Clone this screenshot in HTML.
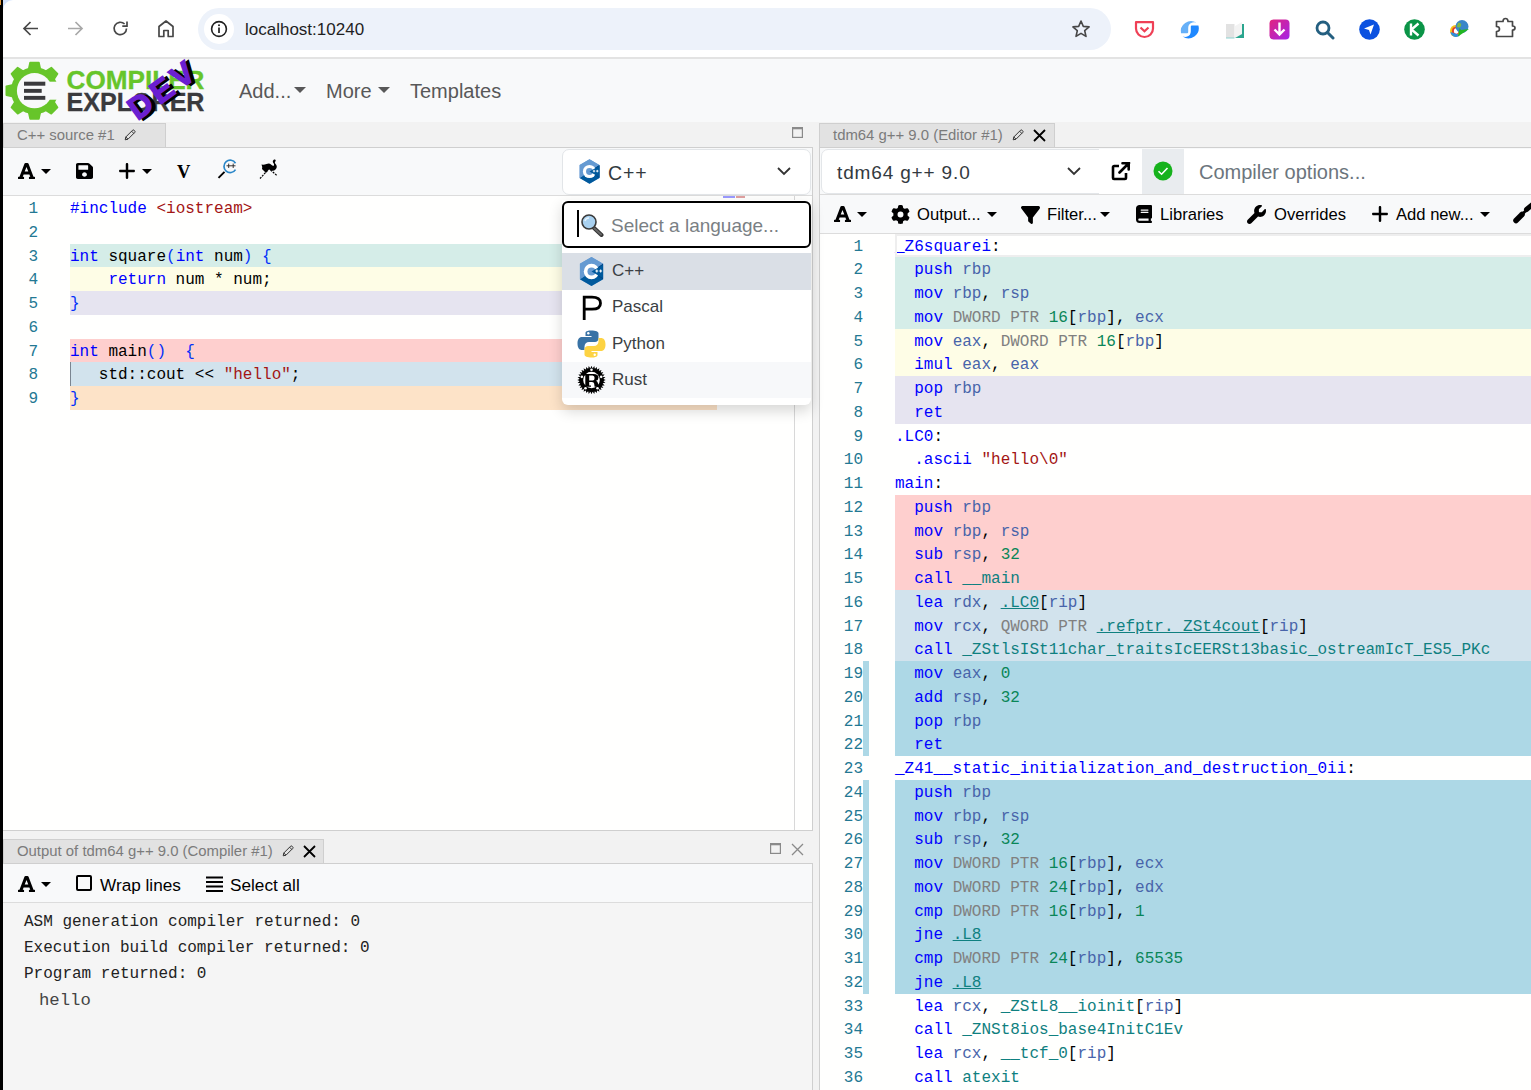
<!DOCTYPE html>
<html><head><meta charset="utf-8">
<style>
*{box-sizing:border-box;margin:0;padding:0}
html,body{width:1531px;height:1090px;overflow:hidden;background:#fff;font-family:"Liberation Sans",sans-serif;position:relative}
.a{position:absolute}
.t{position:absolute;white-space:pre;line-height:1}
.mono{font-family:"Liberation Mono",monospace}
</style></head><body>
<!-- black strip -->
<div class="a" style="left:0;top:0;width:3px;height:1090px;background:#000"></div>
<!-- browser chrome -->
<div class="a" style="left:3px;top:0;width:1528px;height:57px;background:#fff"></div>
<div class="a" style="left:3px;top:0;width:14px;height:10px;background:#d3e3fd"></div>
<div class="a" style="left:3px;top:0;width:30px;height:30px;background:#fff;border-top-left-radius:10px"></div>
<div class="a" style="left:0;top:0;width:1px;height:5px;background:#e39a3b"></div>
<div class="a" style="left:3px;top:57px;width:1528px;height:2px;background:#e3e3e3"></div>
<div class="a" style="left:198px;top:8px;width:913px;height:42px;border-radius:21px;background:#edf2fa"></div>
<div class="a" style="left:204px;top:14px;width:30px;height:30px;border-radius:15px;background:#fff"></div>
<div class="t" style="left:245px;top:21px;font-size:17px;color:#1f1f1f">localhost:10240</div>


<!-- browser icons -->
<svg class="a" style="left:22px;top:20px" width="17" height="17" viewBox="0 0 17 17"><path d="M16 8.5H2.5M8.5 2L2 8.5L8.5 15" fill="none" stroke="#474747" stroke-width="1.7"/></svg>
<svg class="a" style="left:67px;top:20px" width="17" height="17" viewBox="0 0 17 17"><path d="M1 8.5H14.5M8.5 2L15 8.5L8.5 15" fill="none" stroke="#a8a8a8" stroke-width="1.7"/></svg>
<svg class="a" style="left:111px;top:19px" width="19" height="19" viewBox="0 0 19 19"><path d="M15.5 9.5A6.2 6.2 0 1 1 13.6 5" fill="none" stroke="#474747" stroke-width="1.7"/><path d="M16 2.5V7.2H11.3" fill="none" stroke="#474747" stroke-width="1.7"/></svg>
<svg class="a" style="left:157px;top:19px" width="18" height="19" viewBox="0 0 18 19"><path d="M2 17.5V7.5L9 2L16 7.5V17.5H11.2V11.5H6.8V17.5Z" fill="none" stroke="#474747" stroke-width="1.7" stroke-linejoin="round"/></svg>
<svg class="a" style="left:210px;top:20px" width="18" height="18" viewBox="0 0 18 18"><circle cx="9" cy="9" r="7.4" fill="none" stroke="#1f1f1f" stroke-width="1.6"/><path d="M9 7.6V13" stroke="#1f1f1f" stroke-width="1.7"/><circle cx="9" cy="5.3" r="1" fill="#1f1f1f"/></svg>
<svg class="a" style="left:1071px;top:19px" width="20" height="20" viewBox="0 0 20 20"><path d="M10 2L12.3 7.4L18.1 7.9L13.7 11.7L15 17.4L10 14.4L5 17.4L6.3 11.7L1.9 7.9L7.7 7.4Z" fill="none" stroke="#474747" stroke-width="1.6" stroke-linejoin="round"/></svg>
<svg class="a" style="left:1134px;top:20px" width="21" height="19" viewBox="0 0 21 19"><path d="M2 2.2H19V8.5A8.5 8.5 0 0 1 2 8.5Z" fill="none" stroke="#ef4056" stroke-width="2.2" stroke-linejoin="round"/><path d="M6.5 7.5L10.5 11.3L14.5 7.5" fill="none" stroke="#ef4056" stroke-width="2.2"/></svg>
<svg class="a" style="left:1179px;top:19px" width="21" height="21" viewBox="0 0 21 21"><path d="M2 14.3A10.3 10.3 0 0 1 17.4 3.5Q15 3 13.5 3.5Q9.2 4.5 9.2 9V13.3Q9.2 14.3 8.2 14.3Z" fill="#66b0f8"/><path d="M19.4 6.5A10.3 10.3 0 0 1 3.6 17.6Q6 18.2 7.5 17.8Q11.8 16.8 11.8 12.2V7.5Q11.8 6.5 12.8 6.5Z" fill="#1f88ff"/></svg>
<svg class="a" style="left:1225px;top:21px" width="20" height="18" viewBox="0 0 20 18"><path d="M1 3H9.5V17H1Z" fill="#e2e2e2"/><path d="M10 17L17 13V1L10 5Z" fill="#f3f3f3"/><path d="M10 17H19V3H17V13Z" fill="#2aa58e"/><path d="M1 16.5H9.5V17.5H1Z" fill="#8fd3d0"/></svg>
<svg class="a" style="left:1269px;top:19px" width="21" height="21" viewBox="0 0 21 21"><defs><linearGradient id="pk" x1="0" y1="0" x2="1" y2="1"><stop offset="0" stop-color="#e2247f"/><stop offset="1" stop-color="#a424e8"/></linearGradient></defs><rect x="0.5" y="0.5" width="20" height="20" rx="4" fill="url(#pk)"/><path d="M10.5 3.5V15M5.5 10.5L10.5 15.5L15.5 10.5" fill="none" stroke="#fff" stroke-width="2.4"/></svg>
<svg class="a" style="left:1315px;top:20px" width="20" height="20" viewBox="0 0 20 20"><circle cx="8" cy="8" r="6" fill="none" stroke="#245f80" stroke-width="2.8"/><path d="M12.5 12.5L18 18" stroke="#245f80" stroke-width="3" stroke-linecap="round"/></svg>
<svg class="a" style="left:1359px;top:19px" width="21" height="21" viewBox="0 0 21 21"><circle cx="10.5" cy="10.5" r="10.3" fill="#0b51e0"/><path d="M5 9.5L15 5.5L11.5 15.5L10 11Z" fill="#fff"/></svg>
<svg class="a" style="left:1404px;top:19px" width="21" height="21" viewBox="0 0 21 21"><circle cx="10.5" cy="10.5" r="10.3" fill="#0b9447"/><path d="M7 4.5V16.5M14.5 4.5L7.5 10.5L14.5 16.5" fill="none" stroke="#fff" stroke-width="2.4"/></svg>
<svg class="a" style="left:1449px;top:19px" width="22" height="20" viewBox="0 0 22 20"><ellipse cx="6.5" cy="12" rx="5.5" ry="6" fill="#f4c21a"/><ellipse cx="6.5" cy="12" rx="3.5" ry="4" fill="#e23b2a"/><ellipse cx="7.2" cy="12" rx="2.3" ry="2.8" fill="#fff"/><path d="M1.5 13A5.5 6 0 0 0 11 16Z" fill="#2f8fdc"/><circle cx="13" cy="7.5" r="6.5" fill="#3a86c8"/><path d="M9 4C11 3 13 5 12 7C11 9 8 9 8 7Z" fill="#79b84a"/><path d="M9 17.5L20 10L12 11L10.5 9Z" fill="#22b622"/></svg>
<svg class="a" style="left:1495px;top:17px" width="21" height="22" viewBox="0 0 21 22"><path d="M1.5 4.5H8Q8 1.5 10.5 1.5Q13 1.5 13 4.5H17.5V9Q20 9 20 11Q20 13 17.5 13V19.5H1.5V14.5Q4.5 14.5 4.5 12Q4.5 9.5 1.5 9.5Z" fill="none" stroke="#474747" stroke-width="1.7" stroke-linejoin="round"/></svg>
<!-- navbar -->
<div class="a" style="left:3px;top:59px;width:1528px;height:63px;background:#f8f9fa"></div>
<svg class="a" style="left:0;top:0" width="220" height="124" viewBox="0 0 220 124">
<defs><mask id="gm"><rect x="0" y="0" width="220" height="124" fill="#fff"/><rect x="43" y="81.7" width="30" height="18" fill="#000"/><circle cx="34.5" cy="90.7" r="17.6" fill="#000"/></mask></defs>
<g mask="url(#gm)"><circle cx="34.5" cy="90.7" r="23.6" fill="#67c52a"/><path d="M28.30 70.70L30.10 62.50L38.90 62.50L40.70 70.70Z" fill="#67c52a" stroke="#67c52a" stroke-width="1.6" stroke-linejoin="round"/><path d="M44.26 72.17L51.33 67.65L57.55 73.87L53.03 80.94Z" fill="#67c52a" stroke="#67c52a" stroke-width="1.6" stroke-linejoin="round"/><path d="M53.03 100.46L57.55 107.53L51.33 113.75L44.26 109.23Z" fill="#67c52a" stroke="#67c52a" stroke-width="1.6" stroke-linejoin="round"/><path d="M40.70 110.70L38.90 118.90L30.10 118.90L28.30 110.70Z" fill="#67c52a" stroke="#67c52a" stroke-width="1.6" stroke-linejoin="round"/><path d="M24.74 109.23L17.67 113.75L11.45 107.53L15.97 100.46Z" fill="#67c52a" stroke="#67c52a" stroke-width="1.6" stroke-linejoin="round"/><path d="M14.50 96.90L6.30 95.10L6.30 86.30L14.50 84.50Z" fill="#67c52a" stroke="#67c52a" stroke-width="1.6" stroke-linejoin="round"/><path d="M15.97 80.94L11.45 73.87L17.67 67.65L24.74 72.17Z" fill="#67c52a" stroke="#67c52a" stroke-width="1.6" stroke-linejoin="round"/></g>
<rect x="24" y="81.7" width="21.3" height="4" fill="#3a3a3d"/>
<rect x="24" y="88.9" width="17.7" height="3.9" fill="#3a3a3d"/>
<rect x="24" y="95.9" width="21.3" height="3.9" fill="#3a3a3d"/>
<text x="66.5" y="88.9" font-family="Liberation Sans" font-weight="bold" font-size="26" fill="#67c52a" stroke="#67c52a" stroke-width="0.3" textLength="138" lengthAdjust="spacingAndGlyphs">COMPILER</text>
<text x="66.5" y="111" font-family="Liberation Sans" font-weight="bold" font-size="25.3" fill="#3a3a3d" stroke="#3a3a3d" stroke-width="0.3" textLength="138" lengthAdjust="spacingAndGlyphs">EXPLORER</text>
<g transform="translate(141.5,121.5) rotate(-36)"><text x="0" y="0" font-family="Liberation Sans" font-weight="bold" font-size="31.5" fill="#000" stroke="#000" stroke-width="1.4" textLength="74" lengthAdjust="spacing">DEV</text></g>
<g transform="translate(137.5,121) rotate(-36)"><text x="0" y="0" font-family="Liberation Sans" font-weight="bold" font-size="31.5" fill="#6a1fd1" stroke="#6a1fd1" stroke-width="1.4" textLength="74" lengthAdjust="spacing">DEV</text></g>
</svg>
<div class="t" style="left:239px;top:81px;font-size:20px;color:#585858">Add...</div>
<div class="t" style="left:326px;top:81px;font-size:20px;color:#585858">More</div>
<div class="t" style="left:410px;top:81px;font-size:20px;color:#585858">Templates</div>

<!-- tab header rows -->
<div class="a" style="left:3px;top:122px;width:1528px;height:968px;background:#f2f2f2"></div>
<div class="a" style="left:3px;top:123px;width:163px;height:25px;background:#e2e2e2;border:1px solid #cfcfcf;border-bottom:none"></div>
<div class="t" style="left:17px;top:128px;font-size:14.9px;color:#7b7b7b">C++ source #1</div>
<div class="a" style="left:819px;top:123px;width:236px;height:25px;background:#e2e2e2;border:1px solid #cfcfcf;border-bottom:none"></div>
<div class="t" style="left:833px;top:128px;font-size:14.9px;color:#7b7b7b">tdm64 g++ 9.0 (Editor #1)</div>

<!-- left panel -->
<div class="a" style="left:3px;top:147px;width:810px;height:684px;border:1px solid #cfcfcf;border-left:none;background:#fffffe"></div>
<div class="a" style="left:3px;top:148px;width:809px;height:48px;background:#f8f9fa;border-bottom:1px solid #dcdcdc"></div>

<!-- right panel -->
<div class="a" style="left:819px;top:147px;width:712px;height:950px;border:1px solid #cfcfcf;border-right:none;background:#fffffe"></div>
<div class="a" style="left:820px;top:148px;width:711px;height:47px;background:#f8f9fa"></div>
<div class="a" style="left:820px;top:194px;width:711px;height:40px;background:#f8f9fa;border-top:1px solid #dcdcdc;border-bottom:1px solid #dcdcdc"></div>

<!-- output panel -->
<div class="a" style="left:3px;top:838px;width:809px;height:26px;background:#f2f2f2"></div>
<div class="a" style="left:3px;top:839px;width:321px;height:25px;background:#e2e2e2;border:1px solid #cfcfcf;border-bottom:none"></div>
<div class="t" style="left:17px;top:844px;font-size:14.9px;color:#7b7b7b">Output of tdm64 g++ 9.0 (Compiler #1)</div>
<div class="a" style="left:3px;top:863px;width:810px;height:240px;border:1px solid #cfcfcf;border-left:none;background:#f5f5f5"></div>
<div class="a" style="left:3px;top:864px;width:809px;height:39px;background:#f8f9fa;border-bottom:1px solid #dcdcdc"></div>

<!-- left editor content -->
<style>
.ln{position:absolute;left:3px;width:35px;padding-top:2px;text-align:right;color:#237893;font-family:"Liberation Mono",monospace;font-size:16px;line-height:23.75px;height:23.75px}
.cl{position:absolute;white-space:pre;padding-top:2px;font-family:"Liberation Mono",monospace;font-size:16px;line-height:23.75px;height:23.75px;color:#000}
.hl{position:absolute;height:23.75px}
.k{color:#0000ff}.b{color:#0431fa}.s{color:#a31515}.g{color:#808080}.n{color:#098658}.r{color:#4864aa}.f{color:#0f8080}.u{text-decoration:underline}
</style>
<div class="hl" style="left:70px;top:243.5px;width:647px;background:#d5ede8"></div>
<div class="hl" style="left:70px;top:267.25px;width:647px;background:#fefde6"></div>
<div class="hl" style="left:70px;top:291px;width:647px;background:#e6e4f0"></div>
<div class="hl" style="left:70px;top:338.5px;width:647px;background:#fecfce"></div>
<div class="hl" style="left:70px;top:362.25px;width:647px;background:#d2e3ed"></div>
<div class="hl" style="left:70px;top:386px;width:647px;background:#fde3c8"></div>
<div class="ln" style="top:196px">1</div>
<div class="ln" style="top:219.75px">2</div>
<div class="ln" style="top:243.5px">3</div>
<div class="ln" style="top:267.25px">4</div>
<div class="ln" style="top:291px">5</div>
<div class="ln" style="top:314.75px">6</div>
<div class="ln" style="top:338.5px">7</div>
<div class="ln" style="top:362.25px">8</div>
<div class="ln" style="top:386px">9</div>
<div class="cl" style="left:70px;top:196px"><span class="k">#include</span> <span class="s">&lt;iostream&gt;</span></div>
<div class="cl" style="left:70px;top:243.5px"><span class="k">int</span> square<span class="b">(</span><span class="k">int</span> num<span class="b">)</span> <span class="b">{</span></div>
<div class="cl" style="left:70px;top:267.25px">    <span class="k">return</span> num * num;</div>
<div class="cl" style="left:70px;top:291px"><span class="b">}</span></div>
<div class="cl" style="left:70px;top:338.5px"><span class="k">int</span> main<span class="b">()</span>  <span class="b">{</span></div>
<div class="cl" style="left:70px;top:362.25px">   std::cout &lt;&lt; <span class="s">"hello"</span>;</div>
<div class="cl" style="left:70px;top:386px"><span class="b">}</span></div>
<div class="a" style="left:70px;top:362.25px;width:1.3px;height:23.75px;background:#7a8591"></div>
<div class="a" style="left:794px;top:196px;width:1px;height:634px;background:#d8d8d8"></div>

<!-- asm editor -->
<div class="hl" style="left:895px;top:257.25px;width:636px;background:#d5ede8"></div>
<div class="hl" style="left:895px;top:281px;width:636px;background:#d5ede8"></div>
<div class="hl" style="left:895px;top:304.75px;width:636px;background:#d5ede8"></div>
<div class="hl" style="left:895px;top:328.5px;width:636px;background:#fefde6"></div>
<div class="hl" style="left:895px;top:352.25px;width:636px;background:#fefde6"></div>
<div class="hl" style="left:895px;top:376px;width:636px;background:#e6e4f0"></div>
<div class="hl" style="left:895px;top:399.75px;width:636px;background:#e6e4f0"></div>
<div class="hl" style="left:895px;top:494.75px;width:636px;background:#fecfce"></div>
<div class="hl" style="left:895px;top:518.5px;width:636px;background:#fecfce"></div>
<div class="hl" style="left:895px;top:542.25px;width:636px;background:#fecfce"></div>
<div class="hl" style="left:895px;top:566px;width:636px;background:#fecfce"></div>
<div class="hl" style="left:895px;top:589.75px;width:636px;background:#d2e3ed"></div>
<div class="hl" style="left:895px;top:613.5px;width:636px;background:#d2e3ed"></div>
<div class="hl" style="left:895px;top:637.25px;width:636px;background:#d2e3ed"></div>
<div class="hl" style="left:895px;top:661px;width:636px;background:#add8e6"></div>
<div class="hl" style="left:895px;top:684.75px;width:636px;background:#add8e6"></div>
<div class="hl" style="left:895px;top:708.5px;width:636px;background:#add8e6"></div>
<div class="hl" style="left:895px;top:732.25px;width:636px;background:#add8e6"></div>
<div class="hl" style="left:895px;top:779.75px;width:636px;background:#add8e6"></div>
<div class="hl" style="left:895px;top:803.5px;width:636px;background:#add8e6"></div>
<div class="hl" style="left:895px;top:827.25px;width:636px;background:#add8e6"></div>
<div class="hl" style="left:895px;top:851px;width:636px;background:#add8e6"></div>
<div class="hl" style="left:895px;top:874.75px;width:636px;background:#add8e6"></div>
<div class="hl" style="left:895px;top:898.5px;width:636px;background:#add8e6"></div>
<div class="hl" style="left:895px;top:922.25px;width:636px;background:#add8e6"></div>
<div class="hl" style="left:895px;top:946px;width:636px;background:#add8e6"></div>
<div class="hl" style="left:895px;top:969.75px;width:636px;background:#add8e6"></div>
<div class="a" style="left:863px;top:661px;width:6px;height:95px;background:#add8e6"></div>
<div class="a" style="left:863px;top:779.75px;width:6px;height:213.75px;background:#add8e6"></div>
<div class="ln" style="left:820px;width:43px;top:233.5px">1</div>
<div class="cl" style="left:895px;top:233.5px"><span class="k">_Z6squarei</span>:</div>
<div class="ln" style="left:820px;width:43px;top:257.25px">2</div>
<div class="cl" style="left:895px;top:257.25px">  <span class="k">push</span> <span class="r">rbp</span></div>
<div class="ln" style="left:820px;width:43px;top:281px">3</div>
<div class="cl" style="left:895px;top:281px">  <span class="k">mov</span> <span class="r">rbp</span>, <span class="r">rsp</span></div>
<div class="ln" style="left:820px;width:43px;top:304.75px">4</div>
<div class="cl" style="left:895px;top:304.75px">  <span class="k">mov</span> <span class="g">DWORD PTR</span> <span class="n">16</span>[<span class="r">rbp</span>], <span class="r">ecx</span></div>
<div class="ln" style="left:820px;width:43px;top:328.5px">5</div>
<div class="cl" style="left:895px;top:328.5px">  <span class="k">mov</span> <span class="r">eax</span>, <span class="g">DWORD PTR</span> <span class="n">16</span>[<span class="r">rbp</span>]</div>
<div class="ln" style="left:820px;width:43px;top:352.25px">6</div>
<div class="cl" style="left:895px;top:352.25px">  <span class="k">imul</span> <span class="r">eax</span>, <span class="r">eax</span></div>
<div class="ln" style="left:820px;width:43px;top:376px">7</div>
<div class="cl" style="left:895px;top:376px">  <span class="k">pop</span> <span class="r">rbp</span></div>
<div class="ln" style="left:820px;width:43px;top:399.75px">8</div>
<div class="cl" style="left:895px;top:399.75px">  <span class="k">ret</span></div>
<div class="ln" style="left:820px;width:43px;top:423.5px">9</div>
<div class="cl" style="left:895px;top:423.5px"><span class="k">.LC0</span>:</div>
<div class="ln" style="left:820px;width:43px;top:447.25px">10</div>
<div class="cl" style="left:895px;top:447.25px">  <span class="k">.ascii</span> <span class="s">"hello\0"</span></div>
<div class="ln" style="left:820px;width:43px;top:471px">11</div>
<div class="cl" style="left:895px;top:471px"><span class="k">main</span>:</div>
<div class="ln" style="left:820px;width:43px;top:494.75px">12</div>
<div class="cl" style="left:895px;top:494.75px">  <span class="k">push</span> <span class="r">rbp</span></div>
<div class="ln" style="left:820px;width:43px;top:518.5px">13</div>
<div class="cl" style="left:895px;top:518.5px">  <span class="k">mov</span> <span class="r">rbp</span>, <span class="r">rsp</span></div>
<div class="ln" style="left:820px;width:43px;top:542.25px">14</div>
<div class="cl" style="left:895px;top:542.25px">  <span class="k">sub</span> <span class="r">rsp</span>, <span class="n">32</span></div>
<div class="ln" style="left:820px;width:43px;top:566px">15</div>
<div class="cl" style="left:895px;top:566px">  <span class="k">call</span> <span class="f">__main</span></div>
<div class="ln" style="left:820px;width:43px;top:589.75px">16</div>
<div class="cl" style="left:895px;top:589.75px">  <span class="k">lea</span> <span class="r">rdx</span>, <span class="f u">.LC0</span>[<span class="r">rip</span>]</div>
<div class="ln" style="left:820px;width:43px;top:613.5px">17</div>
<div class="cl" style="left:895px;top:613.5px">  <span class="k">mov</span> <span class="r">rcx</span>, <span class="g">QWORD PTR</span> <span class="f u">.refptr._ZSt4cout</span>[<span class="r">rip</span>]</div>
<div class="ln" style="left:820px;width:43px;top:637.25px">18</div>
<div class="cl" style="left:895px;top:637.25px">  <span class="k">call</span> <span class="f">_ZStlsISt11char_traitsIcEERSt13basic_ostreamIcT_ES5_PKc</span></div>
<div class="ln" style="left:820px;width:43px;top:661px">19</div>
<div class="cl" style="left:895px;top:661px">  <span class="k">mov</span> <span class="r">eax</span>, <span class="n">0</span></div>
<div class="ln" style="left:820px;width:43px;top:684.75px">20</div>
<div class="cl" style="left:895px;top:684.75px">  <span class="k">add</span> <span class="r">rsp</span>, <span class="n">32</span></div>
<div class="ln" style="left:820px;width:43px;top:708.5px">21</div>
<div class="cl" style="left:895px;top:708.5px">  <span class="k">pop</span> <span class="r">rbp</span></div>
<div class="ln" style="left:820px;width:43px;top:732.25px">22</div>
<div class="cl" style="left:895px;top:732.25px">  <span class="k">ret</span></div>
<div class="ln" style="left:820px;width:43px;top:756px">23</div>
<div class="cl" style="left:895px;top:756px"><span class="k">_Z41__static_initialization_and_destruction_0ii</span>:</div>
<div class="ln" style="left:820px;width:43px;top:779.75px">24</div>
<div class="cl" style="left:895px;top:779.75px">  <span class="k">push</span> <span class="r">rbp</span></div>
<div class="ln" style="left:820px;width:43px;top:803.5px">25</div>
<div class="cl" style="left:895px;top:803.5px">  <span class="k">mov</span> <span class="r">rbp</span>, <span class="r">rsp</span></div>
<div class="ln" style="left:820px;width:43px;top:827.25px">26</div>
<div class="cl" style="left:895px;top:827.25px">  <span class="k">sub</span> <span class="r">rsp</span>, <span class="n">32</span></div>
<div class="ln" style="left:820px;width:43px;top:851px">27</div>
<div class="cl" style="left:895px;top:851px">  <span class="k">mov</span> <span class="g">DWORD PTR</span> <span class="n">16</span>[<span class="r">rbp</span>], <span class="r">ecx</span></div>
<div class="ln" style="left:820px;width:43px;top:874.75px">28</div>
<div class="cl" style="left:895px;top:874.75px">  <span class="k">mov</span> <span class="g">DWORD PTR</span> <span class="n">24</span>[<span class="r">rbp</span>], <span class="r">edx</span></div>
<div class="ln" style="left:820px;width:43px;top:898.5px">29</div>
<div class="cl" style="left:895px;top:898.5px">  <span class="k">cmp</span> <span class="g">DWORD PTR</span> <span class="n">16</span>[<span class="r">rbp</span>], <span class="n">1</span></div>
<div class="ln" style="left:820px;width:43px;top:922.25px">30</div>
<div class="cl" style="left:895px;top:922.25px">  <span class="k">jne</span> <span class="f u">.L8</span></div>
<div class="ln" style="left:820px;width:43px;top:946px">31</div>
<div class="cl" style="left:895px;top:946px">  <span class="k">cmp</span> <span class="g">DWORD PTR</span> <span class="n">24</span>[<span class="r">rbp</span>], <span class="n">65535</span></div>
<div class="ln" style="left:820px;width:43px;top:969.75px">32</div>
<div class="cl" style="left:895px;top:969.75px">  <span class="k">jne</span> <span class="f u">.L8</span></div>
<div class="ln" style="left:820px;width:43px;top:993.5px">33</div>
<div class="cl" style="left:895px;top:993.5px">  <span class="k">lea</span> <span class="r">rcx</span>, <span class="f">_ZStL8__ioinit</span>[<span class="r">rip</span>]</div>
<div class="ln" style="left:820px;width:43px;top:1017.25px">34</div>
<div class="cl" style="left:895px;top:1017.25px">  <span class="k">call</span> <span class="f">_ZNSt8ios_base4InitC1Ev</span></div>
<div class="ln" style="left:820px;width:43px;top:1041px">35</div>
<div class="cl" style="left:895px;top:1041px">  <span class="k">lea</span> <span class="r">rcx</span>, <span class="f">__tcf_0</span>[<span class="r">rip</span>]</div>
<div class="ln" style="left:820px;width:43px;top:1064.75px">36</div>
<div class="cl" style="left:895px;top:1064.75px">  <span class="k">call</span> <span class="f">atexit</span></div>

<!-- toolbars -->
<svg class="a" style="left:18px;top:163px" width="17" height="16" viewBox="0 32 448 448" preserveAspectRatio="none"><path d="M432 416h-23.41L277.88 53.69A32 32 0 0 0 247.58 32h-47.16a32 32 0 0 0-30.3 21.69L39.41 416H16a16 16 0 0 0-16 16v32a16 16 0 0 0 16 16h128a16 16 0 0 0 16-16v-32a16 16 0 0 0-16-16h-19.580l23.3-64h152.56l23.3 64H304a16 16 0 0 0-16 16v32a16 16 0 0 0 16 16h128a16 16 0 0 0 16-16v-32a16 16 0 0 0-16-16zM176.85 272L224 142.51 271.15 272z" fill="#000"/></svg>
<svg class="a" style="left:41px;top:169px" width="10" height="5" viewBox="0 0 10 5" preserveAspectRatio="none"><path d="M0 0H10L5 5Z" fill="#000"/></svg>
<svg class="a" style="left:76px;top:163px" width="17" height="16" viewBox="0 32 448 448" preserveAspectRatio="none"><path d="M433.941 129.941l-83.882-83.882A48 48 0 0 0 316.118 32H48C21.49 32 0 53.490 0 80v352c0 26.51 21.49 48 48 48h352c26.51 0 48-21.49 48-48V163.882a48 48 0 0 0-14.059-33.941zM224 416c-35.346 0-64-28.654-64-64 0-35.346 28.654-64 64-64s64 28.654 64 64c0 35.346-28.654 64-64 64zm96-304.52V212c0 6.627-5.373 12-12 12H76c-6.627 0-12-5.373-12-12V108c0-6.627 5.373-12 12-12h228.52c3.183 0 6.235 1.264 8.485 3.515l3.48 3.48A11.996 11.996 0 0 1 320 111.48z" fill="#000"/></svg>
<svg class="a" style="left:119px;top:163px" width="16" height="16" viewBox="16 48 416 416" preserveAspectRatio="none"><path d="M256 80c0-17.7-14.3-32-32-32s-32 14.3-32 32V224H48c-17.7 0-32 14.3-32 32s14.3 32 32 32H192V432c0 17.7 14.3 32 32 32s32-14.3 32-32V288H400c17.7 0 32-14.3 32-32s-14.3-32-32-32H256V80z" fill="#000"/></svg>
<svg class="a" style="left:142px;top:169px" width="10" height="5" viewBox="0 0 10 5" preserveAspectRatio="none"><path d="M0 0H10L5 5Z" fill="#000"/></svg>
<div class="t" style="left:177px;top:163px;font-size:18.5px;color:#000;font-family:'Liberation Serif',serif;font-weight:bold">V</div>
<div class="a" style="left:820.5px;top:148.5px;width:290px;height:45.5px;background:#fff;border:1px solid #e3e6e9;border-radius:7px"></div>
<div class="a" style="left:1099px;top:148.5px;width:432px;height:45.5px;background:#fff"></div>
<div class="a" style="left:1142px;top:148.5px;width:42px;height:45.5px;background:#e9ecef"></div>
<div class="t" style="left:837px;top:162.5px;font-size:19px;color:#333a40;letter-spacing:0.85px">tdm64 g++ 9.0</div>
<svg class="a" style="left:1067px;top:167px" width="14" height="9" viewBox="0 0 14 9"><path d="M1 1L7 7L13 1" fill="none" stroke="#333" stroke-width="1.8"/></svg>
<svg class="a" style="left:1111px;top:162px" width="20" height="19" viewBox="0 0 20 19"><path d="M8 4H3.2Q2 4 2 5.2V16Q2 17 3 17H13.8Q15 17 15 15.8V11" fill="none" stroke="#000" stroke-width="2.6" stroke-linejoin="round"/><path d="M8.5 10.5L18 1M11.5 1.3H17.7V7.5" fill="none" stroke="#000" stroke-width="2.6" stroke-linejoin="round" stroke-linecap="round"/></svg>
<svg class="a" style="left:1153px;top:161px" width="20" height="20" viewBox="0 0 20 20"><circle cx="10" cy="10" r="9.5" fill="#16b21c"/><path d="M5.5 10.2L8.6 13.2L14.5 7" fill="none" stroke="#fff" stroke-width="1.6"/></svg>
<div class="t" style="left:1199px;top:162px;font-size:20px;color:#6c757d;letter-spacing:0px">Compiler options...</div>
<svg class="a" style="left:834px;top:206px" width="17" height="16" viewBox="0 32 448 448" preserveAspectRatio="none"><path d="M432 416h-23.41L277.88 53.69A32 32 0 0 0 247.58 32h-47.16a32 32 0 0 0-30.3 21.69L39.41 416H16a16 16 0 0 0-16 16v32a16 16 0 0 0 16 16h128a16 16 0 0 0 16-16v-32a16 16 0 0 0-16-16h-19.580l23.3-64h152.56l23.3 64H304a16 16 0 0 0-16 16v32a16 16 0 0 0 16 16h128a16 16 0 0 0 16-16v-32a16 16 0 0 0-16-16zM176.85 272L224 142.51 271.15 272z" fill="#000"/></svg>
<svg class="a" style="left:857px;top:212px" width="10" height="5" viewBox="0 0 10 5" preserveAspectRatio="none"><path d="M0 0H10L5 5Z" fill="#000"/></svg>
<svg class="a" style="left:891px;top:205px" width="19" height="19" viewBox="0 0 512 512" preserveAspectRatio="none"><path d="M495.9 166.6c3.2 8.7 .5 18.4-6.4 24.6l-43.3 39.4c1.1 8.3 1.7 16.8 1.7 25.4s-.6 17.1-1.7 25.4l43.3 39.4c6.9 6.2 9.6 15.9 6.4 24.6c-4.4 11.9-9.7 23.3-15.8 34.3l-4.7 8.1c-6.6 11-14 21.4-22.1 31.2c-5.9 7.2-15.7 9.6-24.5 6.8l-55.7-17.7c-13.4 10.3-28.2 18.9-44 25.4l-12.5 57.1c-2 9.1-9 16.3-18.2 17.8c-13.8 2.3-28 3.5-42.5 3.5s-28.7-1.2-42.5-3.5c-9.2-1.5-16.2-8.7-18.2-17.8l-12.5-57.1c-15.8-6.5-30.6-15.1-44-25.4L83.1 425.9c-8.8 2.8-18.6 .3-24.5-6.8c-8.1-9.8-15.5-20.2-22.1-31.2l-4.7-8.1c-6.1-11-11.4-22.4-15.8-34.3c-3.2-8.7-.5-18.4 6.4-24.6l43.3-39.4C64.6 273.1 64 264.6 64 256s.6-17.1 1.7-25.4L22.4 191.2c-6.9-6.2-9.6-15.9-6.4-24.6c4.4-11.9 9.7-23.3 15.8-34.3l4.7-8.1c6.6-11 14-21.4 22.1-31.2c5.9-7.2 15.7-9.6 24.5-6.8l55.7 17.7c13.4-10.3 28.2-18.9 44-25.4l12.5-57.1c2-9.1 9-16.3 18.2-17.8C227.3 1.2 241.5 0 256 0s28.7 1.2 42.5 3.5c9.2 1.5 16.2 8.7 18.2 17.8l12.5 57.1c15.8 6.5 30.6 15.1 44 25.4l55.7-17.7c8.8-2.8 18.6-.3 24.5 6.8c8.1 9.8 15.5 20.2 22.1 31.2l4.7 8.1c6.1 11 11.4 22.4 15.8 34.3zM256 336a80 80 0 1 0 0-160 80 80 0 1 0 0 160z" fill="#000"/></svg>
<div class="t" style="left:917px;top:207px;font-size:16.6px;color:#000;">Output...</div>
<svg class="a" style="left:987px;top:212px" width="10" height="5" viewBox="0 0 10 5" preserveAspectRatio="none"><path d="M0 0H10L5 5Z" fill="#000"/></svg>
<svg class="a" style="left:1021px;top:206px" width="19" height="18" viewBox="0 32 512 448" preserveAspectRatio="none"><path d="M3.9 54.9C10.5 40.9 24.5 32 40 32H472c15.5 0 29.5 8.9 36.1 22.9s4.6 30.5-5.2 42.5L320 320.9V448c0 12.1-6.8 23.2-17.7 28.6s-23.8 4.3-33.5-3l-64-48c-8.1-6-12.8-15.5-12.8-25.6V320.9L9 97.3C-.7 85.4-2.8 68.8 3.9 54.9z" fill="#000"/></svg>
<div class="t" style="left:1047px;top:207px;font-size:16.6px;color:#000;">Filter...</div>
<svg class="a" style="left:1100px;top:212px" width="10" height="5" viewBox="0 0 10 5" preserveAspectRatio="none"><path d="M0 0H10L5 5Z" fill="#000"/></svg>
<svg class="a" style="left:1136px;top:205px" width="16" height="18" viewBox="0 0 448 512" preserveAspectRatio="none"><path d="M96 0C43 0 0 43 0 96V416c0 53 43 96 96 96H384h32c17.7 0 32-14.3 32-32s-14.3-32-32-32V384c17.7 0 32-14.3 32-32V32c0-17.7-14.3-32-32-32H384 96zm0 384H352v64H96c-17.7 0-32-14.3-32-32s14.3-32 32-32zm32-240c0-8.8 7.2-16 16-16H336c8.8 0 16 7.2 16 16s-7.2 16-16 16H144c-8.8 0-16-7.2-16-16zm16 48H336c8.8 0 16 7.2 16 16s-7.2 16-16 16H144c-8.8 0-16-7.2-16-16s7.2-16 16-16z" fill="#000"/></svg>
<div class="t" style="left:1160px;top:207px;font-size:16.6px;color:#000;">Libraries</div>
<svg class="a" style="left:1247px;top:205px" width="19" height="19" viewBox="0 0 512 512" preserveAspectRatio="none"><path d="M352 320c88.4 0 160-71.6 160-160c0-15.3-2.2-30.1-6.2-44.2c-3.1-10.8-16.4-13.2-24.3-5.3l-76.8 76.8c-3 3-7.1 4.7-11.3 4.7H336c-8.8 0-16-7.2-16-16V118.6c0-4.2 1.7-8.3 4.7-11.3l76.8-76.8c7.9-7.9 5.4-21.2-5.3-24.3C382.1 2.2 367.3 0 352 0C263.6 0 192 71.6 192 160c0 19.1 3.4 37.5 9.5 54.5L19.9 396.1C7.2 408.8 0 426.1 0 444.1C0 481.6 30.4 512 67.9 512c18 0 35.3-7.200 48-19.9L297.5 310.5c17 6.2 35.4 9.5 54.5 9.5z" fill="#000"/></svg>
<div class="t" style="left:1274px;top:207px;font-size:16.6px;color:#000;">Overrides</div>
<svg class="a" style="left:1372px;top:206px" width="16" height="16" viewBox="16 48 416 416" preserveAspectRatio="none"><path d="M256 80c0-17.7-14.3-32-32-32s-32 14.3-32 32V224H48c-17.7 0-32 14.3-32 32s14.3 32 32 32H192V432c0 17.7 14.3 32 32 32s32-14.3 32-32V288H400c17.7 0 32-14.3 32-32s-14.3-32-32-32H256V80z" fill="#000"/></svg>
<div class="t" style="left:1396px;top:207px;font-size:16.6px;color:#000;">Add new...</div>
<svg class="a" style="left:1480px;top:212px" width="10" height="5" viewBox="0 0 10 5" preserveAspectRatio="none"><path d="M0 0H10L5 5Z" fill="#000"/></svg>
<svg class="a" style="left:1510px;top:200px" width="21" height="26" viewBox="0 0 21 26"><path d="M6 20.5L12 14.5" stroke="#000" stroke-width="5.5" stroke-linecap="round"/><path d="M11 15.5L16 10.5" stroke="#000" stroke-width="2.8"/><path d="M16.5 9.5L23 4" stroke="#000" stroke-width="5" stroke-linecap="round"/></svg>
<svg class="a" style="left:18px;top:876px" width="17" height="16" viewBox="0 32 448 448" preserveAspectRatio="none"><path d="M432 416h-23.41L277.88 53.69A32 32 0 0 0 247.58 32h-47.16a32 32 0 0 0-30.3 21.69L39.41 416H16a16 16 0 0 0-16 16v32a16 16 0 0 0 16 16h128a16 16 0 0 0 16-16v-32a16 16 0 0 0-16-16h-19.580l23.3-64h152.56l23.3 64H304a16 16 0 0 0-16 16v32a16 16 0 0 0 16 16h128a16 16 0 0 0 16-16v-32a16 16 0 0 0-16-16zM176.85 272L224 142.51 271.15 272z" fill="#000"/></svg>
<svg class="a" style="left:41px;top:882px" width="10" height="5" viewBox="0 0 10 5" preserveAspectRatio="none"><path d="M0 0H10L5 5Z" fill="#000"/></svg>
<div class="a" style="left:76px;top:875px;width:16px;height:16px;border:2px solid #000;border-radius:2px"></div>
<div class="t" style="left:100px;top:877px;font-size:17.2px;color:#000;">Wrap lines</div>
<svg class="a" style="left:206px;top:876px" width="17" height="16" viewBox="0 0 17 16"><path d="M0 1.5H17M0 6H17M0 10.5H17M0 15H17" stroke="#000" stroke-width="2"/></svg>
<div class="t" style="left:230px;top:877px;font-size:17.2px;color:#000;">Select all</div>
<div class="cl" style="left:24px;top:909px;font-size:16px;color:#222">ASM generation compiler returned: 0</div>
<div class="cl" style="left:24px;top:935px;font-size:16px;color:#222">Execution build compiler returned: 0</div>
<div class="cl" style="left:24px;top:961px;font-size:16px;color:#222">Program returned: 0</div>
<div class="cl" style="left:39px;top:987px;font-size:17.3px;color:#444">hello</div>



<!-- toolbar extra icons -->
<svg class="a" style="left:216px;top:158px" width="24" height="22" viewBox="0 0 24 22"><path d="M19.5 5.2A6.2 6.2 0 1 0 19.5 11.6" fill="none" stroke="#2a87c8" stroke-width="1.7"/><path d="M2.5 19.8L8.5 13.8" stroke="#000" stroke-width="1.9"/><path d="M10.5 7.8H15M12.7 5.6V10M15 7.8H19.5M17.2 5.6V10" stroke="#222" stroke-width="0.9"/></svg>
<svg class="a" style="left:258px;top:158px" width="22" height="22" viewBox="0 0 22 22"><path d="M16 1.5Q18.5 1 17.5 3.2Q16 4.5 18 6.5Q19.8 9 17.5 11.5Q15.5 13.5 13.5 12.5L11 11.5Q9 13 8 15L4 11Q4.5 8.5 3.5 6.5Q6 7 8.5 6Q11.5 5 13 6.5Q15 8.5 16 7.5Q16.5 6 15 4.5Q14 3 16 1.5Z" fill="#000"/><path d="M9.5 12.5L2 20.5M12.5 12L19 17.5" stroke="#000" stroke-width="1.2" stroke-dasharray="2 1"/></svg>
<div class="a" style="left:723px;top:196px;width:12px;height:1.5px;background:#9a9aff"></div>
<div class="a" style="left:736px;top:196px;width:9px;height:1.5px;background:#e0a0a0"></div>
<div class="a" style="left:895px;top:233.5px;width:636px;height:23.75px;border:2px solid #eeeeee;border-right:none"></div>
<!-- language select -->
<div class="a" style="left:561.5px;top:148.5px;width:249px;height:46px;background:#fff;border:1px solid #e2e5e8;border-radius:7px"></div>
<svg class="a" style="left:578px;top:159px" width="23" height="25" viewBox="0 0 28 30"><path d="M14 0L26 7V23L14 30L2 23V7Z" fill="#659ad2"/><path d="M26 7L26 23L14 30L2 23L14 15Z" fill="#00599c"/><path d="M26 7L14 15L2 23L2 7L14 0Z" fill="#659ad2"/><path d="M26 7V23L14 15Z" fill="#004482"/><circle cx="14" cy="15" r="8" fill="#fff"/><circle cx="14" cy="15" r="4.2" fill="#659ad2"/><path d="M14 15L26 8V22Z" fill="#00599c"/><path d="M18 14.5H21M19.5 13V16M22 14.5H25M23.5 13V16" stroke="#fff" stroke-width="1.1"/></svg>
<div class="t" style="left:608px;top:164px;font-size:19.5px;color:#333a40;letter-spacing:0.9px">C++</div>
<svg class="a" style="left:777px;top:167px" width="14" height="9" viewBox="0 0 14 9"><path d="M1 1L7 7L13 1" fill="none" stroke="#333" stroke-width="1.8"/></svg>
<div class="a" style="left:561.5px;top:200px;width:249px;height:204.5px;background:#fff;border-radius:0 0 6px 6px;box-shadow:0 6px 14px rgba(0,0,0,0.16)"></div>
<div class="a" style="left:561.5px;top:200.5px;width:249px;height:47px;background:#fff;border:2px solid #000;border-radius:6px"></div>
<div class="a" style="left:577px;top:210px;width:1.6px;height:27px;background:#000"></div>
<svg class="a" style="left:580px;top:213px" width="24" height="24" viewBox="0 0 24 24"><path d="M13.5 14.5L21.5 22" stroke="#333" stroke-width="4" stroke-linecap="round"/><path d="M14.2 15.2L21 21.6" stroke="#666" stroke-width="2" stroke-linecap="round"/><circle cx="9" cy="9" r="7" fill="#a9d1f0" stroke="#3a3a3a" stroke-width="1.6"/><path d="M5 8A4 4 0 0 1 9 5" fill="none" stroke="#e6f3fb" stroke-width="1.5"/></svg>
<div class="t" style="left:611px;top:216px;font-size:19px;color:#7a7f84;">Select a language...</div>
<div class="a" style="left:561.5px;top:253px;width:249px;height:36.6px;background:#dadfe6"></div>
<div class="a" style="left:561.5px;top:361.5px;width:249px;height:36.4px;background:#f7f8fa"></div>
<svg class="a" style="left:578px;top:257px" width="27" height="29" viewBox="0 0 28 30"><path d="M14 0L26 7V23L14 30L2 23V7Z" fill="#659ad2"/><path d="M26 7L26 23L14 30L2 23L14 15Z" fill="#00599c"/><path d="M26 7L14 15L2 23L2 7L14 0Z" fill="#659ad2"/><path d="M26 7V23L14 15Z" fill="#004482"/><circle cx="14" cy="15" r="8" fill="#fff"/><circle cx="14" cy="15" r="4.2" fill="#659ad2"/><path d="M14 15L26 8V22Z" fill="#00599c"/><path d="M18 14.5H21M19.5 13V16M22 14.5H25M23.5 13V16" stroke="#fff" stroke-width="1.1"/></svg>
<div class="t" style="left:612px;top:262px;font-size:17px;color:#3b3f44;">C++</div>
<svg class="a" style="left:581px;top:295px" width="22" height="26" viewBox="0 0 22 26"><path d="M3.2 25V2.2H11Q19.5 2.2 19.5 8.2Q19.5 14.2 11 14.2H3.2" fill="none" stroke="#000" stroke-width="2.8"/></svg>
<div class="t" style="left:612px;top:298px;font-size:17px;color:#3b3f44;">Pascal</div>
<svg class="a" style="left:577px;top:330px" width="29" height="28" viewBox="0 0 29 28"><path d="M14 0.5C8 0.5 8.5 3 8.5 3V6H14.5V7H5C2 7 0.5 9.5 0.5 13.5C0.5 18 2.5 20 5 20H7.5V16.5C7.5 14 9.5 12 12 12H18C20 12 21.5 10.5 21.5 8.5V3.5C21.5 1.5 19 0.5 14 0.5Z" fill="#3872a5"/><path d="M15 27.5C21 27.5 20.5 25 20.5 25V22H14.5V21H24C27 21 28.5 18.5 28.5 14.5C28.5 10 26.5 8 24 8H21.5V11.5C21.5 14 19.5 16 17 16H11C9 16 7.5 17.5 7.5 19.5V24.5C7.5 26.5 10 27.5 15 27.5Z" fill="#fdd343"/><circle cx="11.3" cy="3.3" r="1.2" fill="#fff"/><circle cx="17.7" cy="24.7" r="1.2" fill="#fff"/></svg>
<div class="t" style="left:612px;top:334.5px;font-size:17px;color:#3b3f44;">Python</div>
<svg class="a" style="left:577px;top:366px" width="29" height="28" viewBox="0 0 29 28"><path d="M25.94 12.85L28.70 14.00L25.94 15.15ZM25.95 15.11L28.43 16.77L25.50 17.36ZM25.51 17.32L27.62 19.43L24.63 19.44ZM24.65 19.40L26.31 21.89L23.38 21.31ZM23.40 21.28L24.54 24.04L21.78 22.90ZM21.81 22.88L22.39 25.81L19.90 24.15ZM19.94 24.13L19.93 27.12L17.82 25.01ZM17.86 25.00L17.27 27.93L15.61 25.45ZM15.65 25.44L14.50 28.20L13.35 25.44ZM13.39 25.45L11.73 27.93L11.14 25.00ZM11.18 25.01L9.07 27.12L9.06 24.13ZM9.10 24.15L6.61 25.81L7.19 22.88ZM7.22 22.90L4.46 24.04L5.60 21.28ZM5.62 21.31L2.69 21.89L4.35 19.40ZM4.37 19.44L1.38 19.43L3.49 17.32ZM3.50 17.36L0.57 16.77L3.05 15.11ZM3.06 15.15L0.30 14.00L3.06 12.85ZM3.05 12.89L0.57 11.23L3.50 10.64ZM3.49 10.68L1.38 8.57L4.37 8.56ZM4.35 8.60L2.69 6.11L5.62 6.69ZM5.60 6.72L4.46 3.96L7.22 5.10ZM7.19 5.12L6.61 2.19L9.10 3.85ZM9.06 3.87L9.07 0.88L11.18 2.99ZM11.14 3.00L11.73 0.07L13.39 2.55ZM13.35 2.56L14.50 -0.20L15.65 2.56ZM15.61 2.55L17.27 0.07L17.86 3.00ZM17.82 2.99L19.93 0.88L19.94 3.87ZM19.90 3.85L22.39 2.19L21.81 5.12ZM21.78 5.10L24.54 3.96L23.40 6.72ZM23.38 6.69L26.31 6.11L24.65 8.60ZM24.63 8.56L27.62 8.57L25.51 10.68ZM25.50 10.64L28.43 11.23L25.95 12.89Z" fill="#000"/><circle cx="14.5" cy="14" r="12" fill="#000"/><circle cx="14.5" cy="14" r="8.3" fill="#fff"/><circle cx="14.50" cy="3.80" r="1.3" fill="#fff"/><circle cx="24.20" cy="10.85" r="1.3" fill="#fff"/><circle cx="20.50" cy="22.25" r="1.3" fill="#fff"/><circle cx="8.50" cy="22.25" r="1.3" fill="#fff"/><circle cx="4.80" cy="10.85" r="1.3" fill="#fff"/><path d="M6.5 8H16.5Q21.5 8 21.5 11.6Q21.5 14 19 14.8Q20.8 15.4 21 17.5L21.4 19.5H23V20.8H17.6L17.2 17.8Q17 16 15 16H12.2V19.5H14V20.8H6.5V19.5H8.3V9.3H6.5ZM12.2 9.4V14.6H15.6Q17.6 14.6 17.6 12Q17.6 9.4 15.6 9.4Z" fill="#000" fill-rule="evenodd"/></svg>
<div class="t" style="left:612px;top:371px;font-size:17px;color:#3b3f44;">Rust</div>
<!-- misc icons -->
<svg class="a" style="left:294px;top:87px" width="12" height="6" viewBox="0 0 10 5" preserveAspectRatio="none"><path d="M0 0H10L5 5Z" fill="#585858"/></svg>
<svg class="a" style="left:378px;top:87px" width="12" height="6" viewBox="0 0 10 5" preserveAspectRatio="none"><path d="M0 0H10L5 5Z" fill="#585858"/></svg>
<svg class="a" style="left:124px;top:129px" width="12" height="12" viewBox="0 0 12 12"><path d="M1.2 10.8L1.8 8L8.6 1.2Q9.3 0.6 10 1.2L10.8 2Q11.4 2.7 10.8 3.4L4 10.2Z M7.6 2.2L9.8 4.4M1.8 8L4 10.2" fill="none" stroke="#333" stroke-width="1"/></svg>
<svg class="a" style="left:792px;top:127px" width="11" height="11" viewBox="0 0 11 11"><rect x="0.6" y="0.6" width="9.8" height="9.8" fill="none" stroke="#8a8a8a" stroke-width="1.2"/><path d="M0.6 1.3H10.4" stroke="#8a8a8a" stroke-width="2"/></svg>
<svg class="a" style="left:1012px;top:129px" width="12" height="12" viewBox="0 0 12 12"><path d="M1.2 10.8L1.8 8L8.6 1.2Q9.3 0.6 10 1.2L10.8 2Q11.4 2.7 10.8 3.4L4 10.2Z M7.6 2.2L9.8 4.4M1.8 8L4 10.2" fill="none" stroke="#333" stroke-width="1"/></svg>
<svg class="a" style="left:1033px;top:129px" width="13" height="13" viewBox="0 0 13 13"><path d="M1 1L12 12M12 1L1 12" stroke="#000" stroke-width="1.8"/></svg>
<svg class="a" style="left:282px;top:845px" width="12" height="12" viewBox="0 0 12 12"><path d="M1.2 10.8L1.8 8L8.6 1.2Q9.3 0.6 10 1.2L10.8 2Q11.4 2.7 10.8 3.4L4 10.2Z M7.6 2.2L9.8 4.4M1.8 8L4 10.2" fill="none" stroke="#333" stroke-width="1"/></svg>
<svg class="a" style="left:303px;top:845px" width="13" height="13" viewBox="0 0 13 13"><path d="M1 1L12 12M12 1L1 12" stroke="#000" stroke-width="1.8"/></svg>
<svg class="a" style="left:770px;top:843px" width="11" height="11" viewBox="0 0 11 11"><rect x="0.6" y="0.6" width="9.8" height="9.8" fill="none" stroke="#8a8a8a" stroke-width="1.2"/><path d="M0.6 1.3H10.4" stroke="#8a8a8a" stroke-width="2"/></svg>
<svg class="a" style="left:791px;top:842.5px" width="13" height="13" viewBox="0 0 13 13"><path d="M1 1L12 12M12 1L1 12" stroke="#8a8a8a" stroke-width="1.3"/></svg>
</body></html>
